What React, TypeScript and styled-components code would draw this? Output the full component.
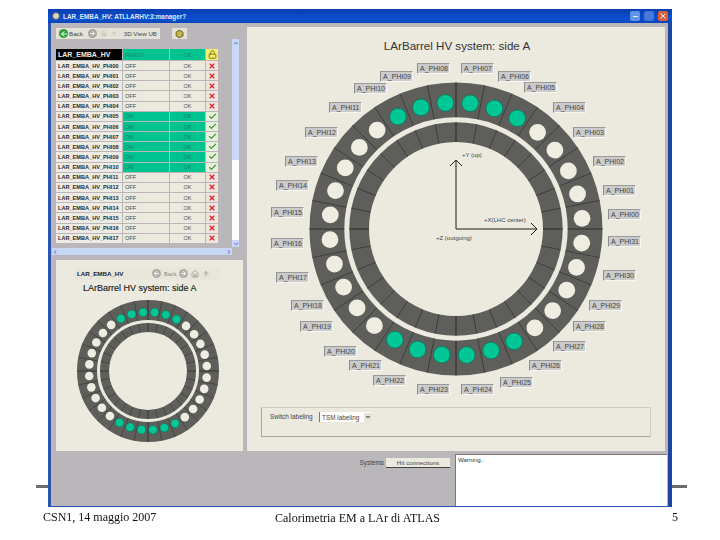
import { createGlobalStyle } from "styled-components";
import styled from "styled-components";
import { Check, X, Lock, Home, ArrowUp, ArrowLeft, ArrowRight, Minus, Square, ChevronUp, ChevronDown, ChevronLeft, ChevronRight, Hexagon } from "lucide-react";

const GlobalStyle = createGlobalStyle`
  html, body { margin: 0; padding: 0; background: #fff; }
  body { font-family: "Liberation Sans", Arial, sans-serif; }
`;

const Slide = styled.div`
  position: relative;
  width: 720px;
  height: 540px;
  overflow: hidden;
  padding-top: 9px;
  box-sizing: border-box;
  filter: blur(0.4px);
`;

const SlideRule = styled.div`
  position: absolute;
  left: 36px;
  top: 485px;
  width: 651px;
  height: 3px;
  background: #6c6c6c;
`;

const Win = styled.div`
  position: relative;
  margin-left: 48px;
  width: 624px;
  height: 498px;
  box-sizing: border-box;
  display: flex;
  flex-direction: column;
  background: #b9b7b9;
  border-left: 3px solid #2a55b0;
  border-right: 4px solid #1c45a4;
  border-bottom: 1px solid #2a55b0;
`;

const TitleBar = styled.div`
  margin-left: -3px;
  margin-right: -4px;
  height: 14px;
  display: flex;
  align-items: center;
  padding: 0 4px;
  gap: 3px;
  background: linear-gradient(#0a3fb0, #0a50d0 70%, #0a46bc);
  color: #dfe7ff;
  font-size: 6.4px;
  font-weight: bold;
`;

const TitleText = styled.span`
  flex: 1;
  white-space: nowrap;
`;

const AppGlyph = styled.span`
  width: 6px;
  height: 6px;
  border-radius: 50%;
  background: #d8d8c0;
  border: 1px solid #556;
`;

const WinButton = styled.span<{ $kind: "min" | "max" | "close" }>`
  width: 10px;
  height: 10px;
  display: flex;
  align-items: center;
  justify-content: center;
  border-radius: 2px;
  color: ${(p) => (p.$kind === "max" ? "#6f90d8" : "#fff")};
  background: ${(p) => (p.$kind === "close" ? "#d8603c" : p.$kind === "max" ? "#3f74d8" : "#5f93e8")};
  margin-right: ${(p) => (p.$kind === "close" ? "0" : "1px")};
`;

const Client = styled.div`
  flex: none;
  height: 424px;
  margin-top: 4px;
  padding: 0 3px 0 1px;
  display: grid;
  grid-template-columns: 191px 418px;
  column-gap: 4px;
`;

const LeftColumn = styled.div`
  display: flex;
  flex-direction: column;
  min-height: 0;
`;

const Toolbar = styled.div`
  margin: 1px 0 0 4px;
  height: 11px;
  display: flex;
  gap: 12px;
`;

const ToolGroup = styled.div<{ $width: number }>`
  width: ${(p) => p.$width}px;
  display: flex;
  align-items: center;
  justify-content: ${(p) => (p.$width < 20 ? "center" : "flex-start")};
  gap: 4px;
  padding: 0 3px;
  box-sizing: border-box;
  background: #e4e1d6;
  font-size: 6.2px;
  color: #444;
  white-space: nowrap;
`;

const BackText = styled.span`
  margin-left: -3px;
  margin-right: 1px;
`;

const ViewText = styled.span`
  margin-left: 3px;
`;

const RoundIcon = styled.span<{ $color: string }>`
  width: 9px;
  height: 9px;
  flex: none;
  border-radius: 50%;
  background: ${(p) => p.$color};
  color: #fff;
  display: flex;
  align-items: center;
  justify-content: center;
`;

const TableWrap = styled.div`
  height: 208px;
  display: flex;
  justify-content: space-between;
  padding: 0 4px 0 4px;
`;

const HvTable = styled.div`
  margin-top: 10px;
  width: 163px;
  display: grid;
  grid-template-columns: 67px 47px 36px 13px;
  grid-template-rows: 12px repeat(18, 10.17px);
  align-content: start;
`;

const Cell = styled.div<{ $bg: string; $color?: string; $bold?: boolean; $center?: boolean; $head?: boolean }>`
  background: ${(p) => p.$bg};
  color: ${(p) => p.$color ?? "#2b2b2b"};
  font-size: ${(p) => (p.$head ? "7px" : "5.6px")};
  font-weight: ${(p) => (p.$bold ? "bold" : "normal")};
  display: flex;
  align-items: center;
  justify-content: ${(p) => (p.$center ? "center" : "flex-start")};
  padding-left: ${(p) => (p.$center ? 0 : 2)}px;
  margin: 0 1px 1px 0;
  white-space: nowrap;
  overflow: hidden;
  min-width: 0;
`;

const VScroll = styled.div`
  width: 7px;
  display: flex;
  flex-direction: column;
  background: #fff;
`;

const ScrollButton = styled.div`
  flex: none;
  height: 7px;
  background: #c6d6f4;
  color: #33558c;
  display: flex;
  align-items: center;
  justify-content: center;
`;

const VThumb = styled.div`
  height: 114px;
  background: #c9d8f6;
`;

const VTrack = styled.div`
  flex: 1;
`;

const HScroll = styled.div`
  margin-top: 1px;
  width: 180px;
  height: 7px;
  flex: none;
  display: flex;
  align-items: center;
  justify-content: space-between;
  background: #c6d6f4;
  color: #33558c;
`;

const SmallPanel = styled.div`
  flex: 1;
  margin: 5px 0 0 4px;
  background: #ece9df;
  display: flex;
  flex-direction: column;
  padding: 7px 0 0 19px;
`;

const SmallToolbar = styled.div`
  width: 145px;
  height: 13px;
  display: flex;
  align-items: center;
  background: #e8e5da;
`;

const SmallName = styled.span`
  width: 77px;
  padding-left: 2px;
  box-sizing: border-box;
  font-size: 6.2px;
  font-weight: bold;
  color: #222;
`;

const SmallTools = styled.div`
  flex: 1;
  display: flex;
  align-items: center;
  gap: 3px;
  font-size: 5.6px;
  color: #8a8a86;
`;

const SmallTitle = styled.div`
  height: 14px;
  margin: 1px 0 0 8px;
  line-height: 14px;
  font-size: 9px;
  color: #1b1b1b;
  -webkit-text-stroke: 0.15px #1b1b1b;
`;

const SmallRing = styled.div`
  margin: 3px 0 0 0;
  line-height: 0;
`;

const MainPanel = styled.div`
  background: #ece9df;
  padding: 11px 14px 14px;
  display: flex;
  flex-direction: column;
`;

const MainTitle = styled.div`
  height: 16px;
  line-height: 16px;
  text-align: center;
  font-size: 11.6px;
  color: #333;
  margin-left: 2px;
`;

const Canvas = styled.div`
  position: relative;
  margin: 0 -14px;
  height: 346px;
  line-height: 0;
`;

const PhiTag = styled.span<{ $x: number; $y: number }>`
  position: absolute;
  left: ${(p) => p.$x - 247}px;
  top: ${(p) => p.$y - 54}px;
  width: 33px;
  height: 11px;
  box-sizing: border-box;
  padding-left: 2px;
  line-height: 10px;
  font-size: 7px;
  white-space: nowrap;
  color: #444;
  background: #cbcbcb;
  border-left: 1px solid #8c8c8c;
  border-top: 1px solid #9a9a9a;
  border-right: 1px solid #f8f6f0;
  border-bottom: 1px solid #f8f6f0;
`;

const AxisNote = styled.span<{ $x: number; $y: number }>`
  position: absolute;
  left: ${(p) => p.$x - 247}px;
  top: ${(p) => p.$y - 54}px;
  font-size: 6px;
  line-height: 8px;
  white-space: nowrap;
  color: #444;
`;

const SwitchBox = styled.div`
  height: 30px;
  margin-top: 7px;
  box-sizing: border-box;
  border: 1px solid #d0cec2;
  border-left-color: #a8a69c;
  border-bottom-color: #a8a69c;
  padding: 4px 0 0 8px;
  display: flex;
  align-items: flex-start;
  gap: 6px;
  font-size: 6.4px;
  color: #444;
`;

const SwitchLabel = styled.span`
  width: 43px;
  line-height: 9px;
  white-space: nowrap;
`;

const FakeSelect = styled.div`
  width: 53px;
  height: 10px;
  box-sizing: border-box;
  display: flex;
  align-items: center;
  justify-content: space-between;
  padding-left: 2px;
  background: #fff;
  border-left: 1px solid #777;
  white-space: nowrap;
`;

const SelectArrow = styled.span`
  width: 8px;
  height: 9px;
  background: #e6e3d9;
  box-sizing: border-box;
  display: flex;
  align-items: center;
  justify-content: center;
  color: #111;
`;

const StatusRow = styled.div`
  flex: 1;
  display: flex;
  justify-content: flex-end;
  padding-right: 1px;
`;

const StatusLabel = styled.span`
  margin-top: 8px;
  font-size: 6.4px;
  line-height: 8px;
  color: #444;
`;

const StatusButton = styled.div`
  margin: 7px 5px 0 2px;
  width: 64px;
  height: 9px;
  line-height: 9px;
  text-align: center;
  font-size: 6.2px;
  color: #444;
  background: #ece9df;
  border-bottom: 1px solid #444;
  white-space: nowrap;
`;

const LogBox = styled.div`
  width: 212px;
  margin-top: 3px;
  box-sizing: border-box;
  background: #fff;
  border-left: 1px solid #777;
  border-top: 1px solid #777;
  padding: 1px 2px;
  font-size: 6.2px;
  line-height: 8px;
  color: #333;
`;

const Footer = styled.div`
  display: grid;
  grid-template-columns: 232px 397px auto;
  padding: 3px 0 0 43px;
  font-family: "Liberation Serif", "Times New Roman", serif;
  font-size: 12px;
  line-height: 14px;
  color: #111;
`;

const FooterDate = styled.span``;

const FooterTitle = styled.span`
  margin-top: 1px;
`;

interface RingGeometry {
  size: number;
  outer: number;
  gapOuter: number;
  gapInner: number;
  inner: number;
  holeAt: number;
  hole: number;
  line: number;
}

const rad = (deg: number) => (deg * Math.PI) / 180;

// sector 0 starts at 12 o'clock, going clockwise
const isOn = (i: number) => i < 3 || i >= 29 || (i >= 13 && i < 19);

const SectorRing = ({ g, cx, cy }: { g: RingGeometry; cx: number; cy: number }) => {
  const at = (deg: number, r: number) => ({
    x: cx + r * Math.sin(rad(deg)),
    y: cy - r * Math.cos(rad(deg)),
  });
  const sectors = Array.from({ length: 32 }, (_, i) => i);
  const band = (from: number, to: number, key: string) => (
    <circle key={key} cx={cx} cy={cy} r={(from + to) / 2} fill="none" stroke="#5e5f5b" strokeWidth={from - to} />
  );
  return (
    <>
      {band(g.outer, g.gapOuter, "o")}
      {band(g.gapInner, g.inner, "i")}
      {sectors.map((i) => {
        const deg = i * 11.25;
        const a = at(deg, g.outer);
        const b = at(deg, g.gapOuter);
        const c = at(deg, g.gapInner);
        const d = at(deg, g.inner);
        const w = i % 8 === 0 ? g.line * 1.6 : g.line;
        return (
          <g key={i} stroke="#2e2f2c" strokeWidth={w}>
            <line x1={a.x} y1={a.y} x2={b.x} y2={b.y} />
            <line x1={c.x} y1={c.y} x2={d.x} y2={d.y} />
          </g>
        );
      })}
      {sectors.map((i) => {
        const p = at(i * 11.25 + 5.625 + 0.8, g.holeAt);
        return (
          <circle
            key={i}
            cx={p.x}
            cy={p.y}
            r={g.hole}
            fill={isOn(i) ? "#00c795" : "#efece2"}
            stroke={isOn(i) ? "#0b6b55" : "none"}
            strokeWidth={g.line}
          />
        );
      })}
    </>
  );
};

const bigRing: RingGeometry = { size: 346, outer: 146.5, gapOuter: 111.7, gapInner: 106.7, inner: 87, holeAt: 126.5, hole: 8.4, line: 0.7 };
const smallRing: RingGeometry = { size: 146, outer: 71, gapOuter: 51, gapInner: 48, inner: 39, holeAt: 59, hole: 4.3, line: 0.5 };

const tags: [string, number, number][] = [
  ["A_PHI00", 608, 209], ["A_PHI01", 603, 185], ["A_PHI02", 593, 156], ["A_PHI03", 573, 127],
  ["A_PHI04", 553, 102], ["A_PHI05", 524, 82], ["A_PHI06", 498, 71], ["A_PHI07", 461, 63],
  ["A_PHI08", 417, 63], ["A_PHI09", 380, 71], ["A_PHI10", 354, 83], ["A_PHI11", 329, 102],
  ["A_PHI12", 305, 127], ["A_PHI13", 285, 156], ["A_PHI14", 276, 180], ["A_PHI15", 271, 207],
  ["A_PHI16", 271, 238], ["A_PHI17", 276, 272], ["A_PHI18", 291, 300], ["A_PHI19", 300, 321],
  ["A_PHI20", 324, 346], ["A_PHI21", 349, 360], ["A_PHI22", 373, 375], ["A_PHI23", 417, 384],
  ["A_PHI24", 461, 384], ["A_PHI25", 500, 377], ["A_PHI26", 529, 360], ["A_PHI27", 553, 341],
  ["A_PHI28", 573, 321], ["A_PHI29", 589, 300], ["A_PHI30", 603, 270], ["A_PHI31", 608, 236],
];

const rows = Array.from({ length: 18 }, (_, i) => ({
  name: `LAR_EMBA_HV_PHI${String(i).padStart(2, "0")}`,
  on: i >= 5 && i <= 10,
}));

const GREEN = "#00c38f";
const BEIGE = "#ece9df";

const App = () => (
  <Slide>
    <GlobalStyle />
    <SlideRule />
    <Win>
      <TitleBar>
        <AppGlyph />
        <TitleText>LAR_EMBA_HV: ATLLARHV:3:manager?</TitleText>
        <WinButton $kind="min"><Minus size={7} strokeWidth={3} /></WinButton>
        <WinButton $kind="max"><Square size={6} strokeWidth={2} /></WinButton>
        <WinButton $kind="close"><X size={8} strokeWidth={3} /></WinButton>
      </TitleBar>
      <Client>
        <LeftColumn>
          <Toolbar>
            <ToolGroup $width={104}>
              <RoundIcon $color="#2f9e3c"><ArrowLeft size={8} strokeWidth={3} /></RoundIcon>
              <BackText>Back</BackText>
              <RoundIcon $color="#a6a6a0"><ArrowRight size={7} strokeWidth={3} /></RoundIcon>
              <Home size={9} color="#b4b4ac" />
              <ArrowUp size={9} color="#b4b4ac" />
              <ViewText>3D View UB</ViewText>
            </ToolGroup>
            <ToolGroup $width={15}>
              <Hexagon size={10} color="#5a5a20" fill="#c8b440" strokeWidth={2.5} />
            </ToolGroup>
          </Toolbar>
          <TableWrap>
            <HvTable>
              <Cell $bg="#000" $color="#eee" $bold $head>LAR_EMBA_HV</Cell>
              <Cell $bg={GREEN} $color="#2c8a70">READY</Cell>
              <Cell $bg={GREEN} $color="#2c8a70" $center>OK</Cell>
              <Cell $bg="#f4ee70" $center><Lock size={9} color="#7a7a10" strokeWidth={2.5} /></Cell>
              {rows.map((r) => [
                <Cell key={r.name} $bg="#eeebe4" $bold>{r.name}</Cell>,
                <Cell key={`${r.name}-s`} $bg={r.on ? GREEN : BEIGE} $color={r.on ? "#1f7d64" : "#444"}>{r.on ? "ON" : "OFF"}</Cell>,
                <Cell key={`${r.name}-k`} $bg={r.on ? GREEN : BEIGE} $color={r.on ? "#1f7d64" : "#555"} $center>OK</Cell>,
                <Cell key={`${r.name}-i`} $bg={r.on ? "#e6f0dc" : "#f0e4dc"} $center>
                  {r.on ? <Check size={9} color="#3f9a2c" strokeWidth={3} /> : <X size={8} color="#d8282c" strokeWidth={3.5} />}
                </Cell>,
              ])}
            </HvTable>
            <VScroll>
              <ScrollButton><ChevronUp size={6} strokeWidth={3} /></ScrollButton>
              <VThumb />
              <VTrack />
              <ScrollButton><ChevronDown size={6} strokeWidth={3} /></ScrollButton>
            </VScroll>
          </TableWrap>
          <HScroll>
            <ChevronLeft size={6} strokeWidth={3} />
            <ChevronRight size={6} strokeWidth={3} />
          </HScroll>
          <SmallPanel>
            <SmallToolbar>
              <SmallName>LAR_EMBA_HV</SmallName>
              <SmallTools>
                <RoundIcon $color="#b0b0aa"><ArrowLeft size={7} strokeWidth={3} /></RoundIcon>
                Back
                <RoundIcon $color="#b0b0aa"><ArrowRight size={7} strokeWidth={3} /></RoundIcon>
                <Home size={8} />
                <ArrowUp size={8} />
              </SmallTools>
            </SmallToolbar>
            <SmallTitle>LArBarrel HV system: side A</SmallTitle>
            <SmallRing>
              <svg width={smallRing.size} height={smallRing.size}>
                <SectorRing g={smallRing} cx={73} cy={73} />
              </svg>
            </SmallRing>
          </SmallPanel>
        </LeftColumn>
        <MainPanel>
          <MainTitle>LArBarrel HV system: side A</MainTitle>
          <Canvas>
            <svg width={418} height={346}>
              <SectorRing g={bigRing} cx={209} cy={175} />
              <g fill="none" stroke="#1c1c1c" strokeWidth={1}>
                <path d="M209 106.5V175H289.5" />
                <path d="M203 112L209 106L215 112" />
                <path d="M284 169L290 175L284 181" />
              </g>
            </svg>
            {tags.map(([name, x, y]) => (
              <PhiTag key={name} $x={x} $y={y}>{name}</PhiTag>
            ))}
            <AxisNote $x={462} $y={151}>+Y (up)</AxisNote>
            <AxisNote $x={484} $y={216}>+X(LHC center)</AxisNote>
            <AxisNote $x={436} $y={234}>+Z (outgoing)</AxisNote>
          </Canvas>
          <SwitchBox>
            <SwitchLabel>Switch labeling</SwitchLabel>
            <FakeSelect>
              TSM labeling
              <SelectArrow><ChevronDown size={6} strokeWidth={4} /></SelectArrow>
            </FakeSelect>
          </SwitchBox>
        </MainPanel>
      </Client>
      <StatusRow>
        <StatusLabel>Systems</StatusLabel>
        <StatusButton>Hit connections</StatusButton>
        <LogBox>Warning..</LogBox>
      </StatusRow>
    </Win>
    <Footer>
      <FooterDate>CSN1, 14 maggio 2007</FooterDate>
      <FooterTitle>Calorimetria EM a LAr di ATLAS</FooterTitle>
      <span>5</span>
    </Footer>
  </Slide>
);

export default App;
